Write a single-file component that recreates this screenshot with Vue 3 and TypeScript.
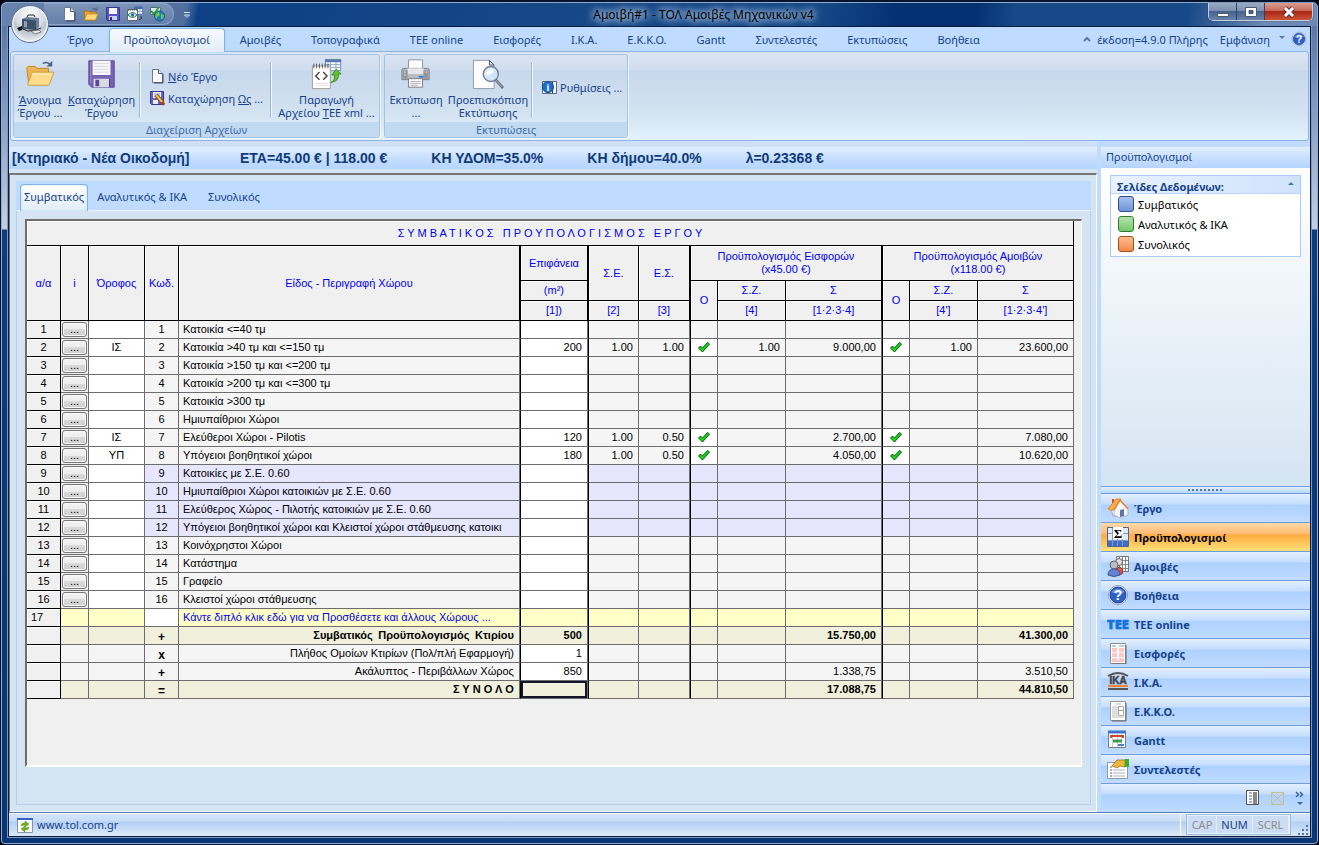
<script setup lang="ts">
import { ref, reactive } from 'vue'

interface Row {
  n: number
  floor: string
  name: string
  area: string
  se: string
  es: string
  sz1: string
  sum1: string
  sz2: string
  sum2: string
  on1: boolean
  on2: boolean
  tint: boolean
}

const icons: Record<string, string> = {
  orb: '<defs><radialGradient id="og" cx=".5" cy=".2" r=".9"><stop offset="0" stop-color="#fff"/><stop offset=".5" stop-color="#d3d8e0"/><stop offset=".6" stop-color="#bcc4cf"/><stop offset="1" stop-color="#fff"/></radialGradient></defs><circle cx="19" cy="19" r="17.5" fill="url(#og)" stroke="#f1f4f9" stroke-width="2"/><circle cx="19" cy="19" r="18.5" fill="none" stroke="#5b6f91"/><path d="M6 23l5-2v4l-3 1z" fill="#111"/><path d="M11 14l5-2 12 1v9l-3 3-14-1z" fill="#6d8099"/><path d="M11 14l14 1.500v9.500l-14-1.500z" fill="#3c5269"/><path d="M13 16l3 .5v6l-3-.5z" fill="#8fa3b8"/><path d="M16 12l1-2 6 0 1 2" fill="none" stroke="#222"/><path d="M9 23l8 3 8-1 5-2" fill="none" stroke="#222"/><path d="M20 26l8-1 2 2-6 2z" fill="#e5e9ee" stroke="#555" stroke-width=".7"/>',
  page: '<path d="M3.5 1.5h6l4 4v9h-10z" fill="#fff" stroke="#6b7a92"/><path d="M9.500 1.500v4h4" fill="#dce4ef" stroke="#47587a"/><path d="M14 6v9H5" fill="none" stroke="#3a4866"/>',
  folder: '<path d="M1 5h5l1 1h6v8H2z" fill="#e8a33a" stroke="#a96c14" stroke-width=".8"/><path d="M4 8h11l-2.500 6H1.500z" fill="#ffd877" stroke="#c48a25" stroke-width=".8"/><path d="M9 3q3-2 5 1m0-3v3h-3" fill="none" stroke="#4c5f86"/>',
  disk: '<path d="M1.500 1.500h13v13h-12l-1-1z" fill="#5553c7" stroke="#39378f"/><path d="M4 2h8v6H4z" fill="#f4f7ff"/><path d="M4 10h8v4H4z" fill="#c9d0ea"/><path d="M5 11h2v3H5z" fill="#30307a"/>',
  diskEdit: '<path d="M1.500 1.500h13v13h-12l-1-1z" fill="#6663c7" stroke="#39378f"/><path d="M4 2h8v6H4z" fill="#f4f7ff"/><path d="M5 4h6M5 6h6" stroke="#8a94b8"/><path d="M4 10h5v4H4z" fill="#e8ecf8"/><path d="M7 5l7 8" stroke="#7a4c10" stroke-width="4"/><path d="M7 5l7 8" stroke="#f4c14c" stroke-width="2"/><path d="M13 12l2 3" stroke="#b0342c" stroke-width="3"/>',
  tableSync: '<path d="M7.500.500h8v8h-8z" fill="#eef4fc" stroke="#557cb5"/><path d="M8 2h7" stroke="#3e6bb0" stroke-width="2"/><path d="M10.500 3v5M13 3v5M8 5.500h7" stroke="#8aa6cd" stroke-width=".8"/><path d="M.500 3.500h10v11H.500z" fill="#fff" stroke="#667"/><path d="M1 4h9" stroke="#333" stroke-dasharray="1 1"/><path d="M1 9q4.500-5 9 0-4.500 5-9 0z" fill="#cfe8f5" stroke="#287c48"/><circle cx="5.500" cy="9" r="1.700" fill="#2b6fb0"/><path d="M12 14q4-1 2-4" fill="none" stroke="#333"/>',
  world: '<path d="M1.500 1.500h10v7h-10z" fill="#ddecf3" stroke="#4a7190"/><path d="M2 5l3 3 5-7" fill="none" stroke="#32a431" stroke-width="2"/><circle cx="10.500" cy="10" r="5" fill="#2779c8" stroke="#17558c"/><path d="M7 7l3-1 1 3-3 2 0 2-2-2zM12 8l3 1-1 4-2 0z" fill="#6bc948"/>',
  openBig: '<path d="M3 11q0-2 2-2h7l2 2h12v17H5z" fill="#edb655" stroke="#c08325"/><path d="M9 15h22q1 0 .5 1L27 28q-.5 1-1.500 1H5q-1.500 0-1-1.500z" fill="#ffdc8b" stroke="#d09a3b"/><path d="M8 17h21" stroke="#fff3c7"/><path d="M20 6q4-3 8 1" fill="none" stroke="#4d6285" stroke-width="1.500"/><path d="M30 3v6h-6z" fill="#4d6285"/>',
  saveBig: '<path d="M3 3h27v28H6l-3-3z" fill="#7661b5" stroke="#5a4795"/><path d="M7 3h19v15H7z" fill="#f8f8fa"/><path d="M9 6h15M9 9h15M9 12h15M9 15h15" stroke="#d3d3db"/><path d="M8 22h17v9H8z" fill="#d9d9e2"/><path d="M10 23h4v7h-4z" fill="#5a4795"/><path d="M25 22v9" stroke="#4a3980"/><path d="M5 4v23" stroke="#a08dd6"/>',
  xmlBig: '<path d="M15.500 1.500h16v12h-16z" fill="#f7fbff" stroke="#6f87ad"/><path d="M15 3h17" stroke="#5778ad" stroke-width="3"/><path d="M20.500 4v10M26.500 4v10M16 7h16M16 10h16" stroke="#8ba2c4"/><path d="M1.500 8.500h19v24h-19z" fill="#fff" stroke="#9a9a9a"/><path d="M3 6v5M6 6v5M9 6v5M12 6v5M15 6v5M18 6v5" stroke="#555"/><path d="M9 15l-4 4 4 4M13 15l4 4-4 4" fill="none" stroke="#444" stroke-width="1.500"/><path d="M5 27h13M5 29h13" stroke="#ddd"/><path d="M21 26q5-2 4-8h-3l5-6 5 5h-3q1 8-8 9z" fill="#62c52f" stroke="#368a15"/>',
  printBig: '<path d="M9 2h15v12H9z" fill="#fff" stroke="#8a929e"/><path d="M2 13q0-2 2-2h25q2 0 2 2v10H2z" fill="#b9bcc1" stroke="#777c85"/><path d="M8 11h17v6H8z" fill="#e5e7ea"/><path d="M3 13h5v9H3zM25 13h5v9h-5z" fill="#92969d"/><path d="M4 15h2M27 15h2M4 18h2" stroke="#e8e8e8"/><path d="M20 20h5" stroke="#2d83d6" stroke-width="2"/><path d="M9 22h15v9H9z" fill="#fff" stroke="#777"/><path d="M11 25h11M11 27h11M11 29h8" stroke="#aab"/>',
  previewBig: '<path d="M1.500 2.500h17l5 5v25h-22z" fill="#fdfdff" stroke="#8d98a8"/><path d="M18.500 2.500v5h5z" fill="#e0e6ee" stroke="#414a5a"/><circle cx="20" cy="17" r="8" fill="#cfe6fa" fill-opacity=".9" stroke="#737f90" stroke-width="1.500"/><path d="M14 18q2-7 10-6-1 6-10 6z" fill="#fff" opacity=".8"/><path d="M25 23l8 9" stroke="#666f7c" stroke-width="3"/><path d="M25 23l7 8" stroke="#aeb6c2"/>',
  info: '<path d="M1.500 2.500h14v12h-14z" fill="#fff" stroke="#5d6b80"/><path d="M11 3h1v11h-1z" fill="#1f3e6d"/><circle cx="7" cy="8" r="5.500" fill="#1f6fd0" stroke="#0f4796"/><text x="7" y="11.500" text-anchor="middle" font-size="10" font-weight="bold" font-family="Liberation Serif" fill="#fff">i</text>',
  help: '<circle cx="11" cy="11" r="9.500" fill="#fff" stroke="#8f9bad"/><circle cx="11" cy="11" r="8" fill="#2c5fc9" stroke="#1d479f"/><path d="M4 8q7-7 14 0-7 3-14 0z" fill="#7ba6ef" opacity=".7"/><text x="11" y="16" text-anchor="middle" font-size="14" font-weight="bold" font-family="Liberation Sans" fill="#fff">?</text>',
  home: '<path d="M4 12h14l-1 7H6z" fill="#fbfbfd" stroke="#a4a9b3"/><path d="M5 2h2v4H5z" fill="#d44d2c"/><path d="M1 12L9 2l5 0-7 11q-3 1-6-1z" fill="#ffad42" stroke="#d67a1e" stroke-width=".8"/><path d="M13 3l8 9v6l-8 3-6-3v-6z" fill="#f3f5f9" stroke="#a4a9b3" stroke-width=".8"/><path d="M7 13l6-10 8 9" fill="none" stroke="#e2852a" stroke-width="1.500"/><path d="M13 13l4-1v7l-4 1z" fill="#5e76a6"/>',
  sigma: '<path d="M.500 1.500h21v19h-21z" fill="#dfe9fa" stroke="#48659a"/><path d="M1 15h20v5H1z" fill="#3d6ec4"/><path d="M1 7.500h20M1 14.500h20M5.500 2v18M10.500 2v18M15.500 2v18" stroke="#7e99c9"/><path d="M6 1h10v12H6z" fill="#fff"/><text x="11" y="12" text-anchor="middle" font-size="13" font-weight="bold" font-family="Liberation Serif" fill="#000">Σ</text>',
  people: '<path d="M9.500 1.500h12v15h-12z" fill="#fff" stroke="#777"/><path d="M12.500 2v14M15.500 2v14M18.500 2v14M10 5.500h11M10 9.500h11M10 13.500h11" stroke="#888"/><path d="M9 20q0-8 4-8 4 2 2 7z" fill="#df5349" stroke="#9a302a"/><circle cx="12" cy="7" r="3.500" fill="#ddd" stroke="#666"/><circle cx="7" cy="10" r="4" fill="#b9bcc2" stroke="#666"/><path d="M1 20q0-6 6-6t6 6q-6 3-12 0z" fill="#6683cf" stroke="#39539b"/>',
  tee: '<text x="11" y="16" text-anchor="middle" font-size="13" font-weight="800" font-family="Open Sans" fill="#1273d8" stroke="#1273d8" stroke-width=".6">ΤΕΕ</text>',
  pink: '<path d="M3.500 1.500h15v20h-15z" fill="#fff" stroke="#909090"/><path d="M5 4h4M12 4h5" stroke="#6aa5ce"/><path d="M5 7h5M12 7h5M5 9h5M12 9h5M5 12h5M12 12h5M5 14h5M12 14h5M5 17h5M12 17h5M5 19h12" stroke="#ff8d8d"/><path d="M19 3v19H5" fill="none" stroke="#666"/>',
  ika: '<path d="M1 5q10-6 20 0" fill="none" stroke="#555" stroke-width="2"/><text x="11" y="13" text-anchor="middle" font-size="10" font-weight="bold" font-family="Liberation Sans" fill="#444" stroke="#444" stroke-width=".5">IKA</text><path d="M1 15h20" stroke="#ff8129" stroke-width="2"/><path d="M1 18h20" stroke="#555" stroke-width="2"/>',
  form: '<path d="M3.500 1.500h15v19h-15z" fill="#fff" stroke="#9a9a9a"/><path d="M8 4h6M5 7h6M5 9h6M5 11h6M5 13h6M5 15h6M5 17h12" stroke="#bbb"/><path d="M11.500 6.500h5v9h-5zM11 10.500h6" fill="none" stroke="#aaa"/><path d="M19 3v18H5" fill="none" stroke="#666"/>',
  gantt: '<path d="M1.500 2.500h17v16h-17z" fill="#fff" stroke="#6d7d99"/><path d="M1 3h18" stroke="#3f72cb" stroke-width="3"/><path d="M5.500 5v13M10.500 5v13M14.500 5v13" stroke="#ccc"/><path d="M4 9V7h12v2" fill="none" stroke="#cf4a2b" stroke-width="2"/><path d="M6 12h9" stroke="#3b9e50" stroke-width="3"/><path d="M11 16h6" stroke="#477fd4" stroke-width="2"/>',
  hand: '<path d="M.500 4.500h20v16h-20z" fill="#fff" stroke="#8d99aa"/><path d="M3 9h2M3 12h2M3 15h2M3 18h2" stroke="#667"/><path d="M6 12h12M6 15h12M6 18h12" stroke="#a9b4c4"/><path d="M5 8l5-6h8v7l-5-1-3 2-2-1z" fill="#f1b73c" stroke="#9d6d17" stroke-width=".8"/><path d="M18 1h4v8h-4z" fill="#33b32f"/>',
  list: '<path d="M1.500.500h12v14h-12z" fill="#fff" stroke="#555"/><path d="M4 3h3M4 6h3M4 9h3M4 12h3" stroke="#4469ad"/><path d="M8 3h4M8 5h4M8 7h4M8 9h4M8 11h4M8 13h4" stroke="#111"/>',
  envelope: '<path d="M1.500 1.500h12v12h-12zM2 2l11 11M13 2L2 13" fill="none" stroke="#c7bf8b"/>',
  refresh: '<path d="M.500 1.500h15v14h-15z" fill="#fff" stroke="#8795ad"/><path d="M0 2h16" stroke="#3263c5" stroke-width="2"/><path d="M4 9q0-3 4-3V4l4 3-4 3V8q-2 0-4 1zM12 10q0 3-4 3v2l-4-3 4-3v2q2 0 4-1z" fill="#6eb31c" stroke="#4d8a12" stroke-width=".5"/>',
}

const quick = [
  { id: 'page', label: 'Νέο' },
  { id: 'folder', label: 'Άνοιγμα' },
  { id: 'disk', label: 'Αποθήκευση' },
  { id: 'tableSync', label: 'Εξαγωγή' },
  { id: 'world', label: 'Έλεγχος' },
]
const menu = ['Έργο', 'Προϋπολογισμοί', 'Αμοιβές', 'Τοπογραφικά', 'TEE online', 'Εισφορές', 'Ι.Κ.Α.', 'Ε.Κ.Κ.Ο.', 'Gantt', 'Συντελεστές', 'Εκτυπώσεις', 'Βοήθεια']
const activeMenu = ref('Προϋπολογισμοί')
const facts = ['[Κτηριακό - Νέα Οικοδομή]', 'ETA=45.00 € | 118.00 €', 'ΚΗ ΥΔΟΜ=35.0%', 'ΚΗ δήμου=40.0%', 'λ=0.23368 €']
const pages = [
  { label: 'Συμβατικός', tone: 'blue' },
  { label: 'Αναλυτικός & ΙΚΑ', tone: 'green' },
  { label: 'Συνολικός', tone: 'orange' },
]
const activePage = ref('Συμβατικός')
const nav = [
  { id: 'home', label: 'Έργο' },
  { id: 'sigma', label: 'Προϋπολογισμοί' },
  { id: 'people', label: 'Αμοιβές' },
  { id: 'help', label: 'Βοήθεια' },
  { id: 'tee', label: 'TEE online' },
  { id: 'pink', label: 'Εισφορές' },
  { id: 'ika', label: 'Ι.Κ.Α.' },
  { id: 'form', label: 'Ε.Κ.Κ.Ο.' },
  { id: 'gantt', label: 'Gantt' },
  { id: 'hand', label: 'Συντελεστές' },
]

const names = [
  'Κατοικία <=40 τμ',
  'Κατοικία >40 τμ και <=150 τμ',
  'Κατοικία >150 τμ και <=200 τμ',
  'Κατοικία >200 τμ και <=300 τμ',
  'Κατοικία >300 τμ',
  'Ημιυπαίθριοι Χώροι',
  'Ελεύθεροι Χώροι - Pilotis',
  'Υπόγειοι βοηθητικοί χώροι',
  'Κατοικίες με Σ.Ε. 0.60',
  'Ημιυπαίθριοι Χώροι κατοικιών με Σ.Ε. 0.60',
  'Ελεύθερος Χώρος - Πιλοτής κατοικιών με Σ.Ε. 0.60',
  'Υπόγειοι βοηθητικοί χώροι και Κλειστοί χώροι στάθμευσης κατοικι',
  'Κοινόχρηστοι Χώροι',
  'Κατάστημα',
  'Γραφείο',
  'Κλειστοί χώροι στάθμευσης',
]
const filled: Record<number, Partial<Row>> = {
  2: { floor: 'ΙΣ', area: '200', se: '1.00', es: '1.00', sz1: '1.00', sum1: '9.000,00', sz2: '1.00', sum2: '23.600,00', on1: true, on2: true },
  7: { floor: 'ΙΣ', area: '120', se: '1.00', es: '0.50', sum1: '2.700,00', sum2: '7.080,00', on1: true, on2: true },
  8: { floor: 'ΥΠ', area: '180', se: '1.00', es: '0.50', sum1: '4.050,00', sum2: '10.620,00', on1: true, on2: true },
}
const rows = reactive<Row[]>(
  names.map((name, i) => ({
    n: i + 1, name, floor: '', area: '', se: '', es: '', sz1: '', sum1: '', sz2: '', sum2: '',
    on1: false, on2: false, tint: i >= 8 && i <= 11, ...filled[i + 1],
  })),
)
const totals = [
  { op: '+', label: 'Συμβατικός\u2002Προϋπολογισμός\u2002Κτιρίου', area: '500', sum1: '15.750,00', sum2: '41.300,00', kind: 'total' },
  { op: 'x', label: 'Πλήθος Ομοίων Κτιρίων (Πολ/πλή Εφαρμογή)', area: '1', sum1: '', sum2: '', kind: 'entry' },
  { op: '+', label: 'Ακάλυπτος - Περιβάλλων Χώρος', area: '850', sum1: '1.338,75', sum2: '3.510,50', kind: 'entry' },
  { op: '=', label: 'Σ Υ Ν Ο Λ Ο', area: '', sum1: '17.088,75', sum2: '44.810,50', kind: 'total grand' },
]
</script>

<template>
  <div class="window">
    <header class="titlebar">
      <button class="orb" aria-label="Μενού εφαρμογής"><svg width="38" height="38" viewBox="0 0 38 38" v-html="icons.orb"></svg></button>
      <div class="quick">
        <button v-for="q in quick" :key="q.id" :aria-label="q.label"><svg width="16" height="16" viewBox="0 0 16 16" v-html="icons[q.id]"></svg></button>
      </div>
      <button class="quick-more" aria-label="Προσαρμογή"><svg width="8" height="8" viewBox="0 0 8 8"><path d="M1 1.500h6M1.500 4h5L4 6.500z" fill="none" stroke="#d6e0f0" /></svg></button>
      <h1>Αμοιβή#1 - ΤΟΛ Αμοιβές Μηχανικών v4</h1>
      <div class="controls">
        <button aria-label="Ελαχιστοποίηση"><svg width="12" height="12" viewBox="0 0 12 12"><path d="M.500 7.500h11v3H.500z" fill="#fff" stroke="#4c5a70" /></svg></button>
        <button aria-label="Μεγιστοποίηση"><svg width="12" height="12" viewBox="0 0 12 12"><path fill-rule="evenodd" d="M.500 1.500h11v9H.500zM4 4.500h4v3H4z" fill="#fff" stroke="#4c5a70" /></svg></button>
        <button class="close" aria-label="Κλείσιμο"><svg width="12" height="12" viewBox="0 0 12 12"><path d="M2 2l8 8M10 2l-8 8" stroke="#5f3038" stroke-width="5" /><path d="M2 2l8 8M10 2l-8 8" stroke="#fff" stroke-width="3" /></svg></button>
      </div>
    </header>

    <div class="client">
      <nav class="menu">
        <button v-for="m in menu" :key="m" :class="{ active: m === activeMenu }" @click="activeMenu = m">{{ m }}</button>
        <div class="menu-right">
          <svg width="8" height="6" viewBox="0 0 8 6"><path d="M1 5l3-3 3 3" fill="none" stroke="#5877a8" stroke-width="2" /></svg>
          <span>έκδοση=4.9.0 Πλήρης</span>
          <button class="view">Εμφάνιση <svg width="6" height="8" viewBox="0 0 6 8"><path d="M0 1h6L3 4z" fill="#5877a8" /></svg></button>
          <button aria-label="Βοήθεια"><svg width="16" height="16" viewBox="0 0 22 22" v-html="icons.help"></svg></button>
        </div>
      </nav>

      <section class="ribbon">
        <div class="group">
          <div class="tools">
            <button class="big open"><svg width="32" height="32" viewBox="0 0 34 34" v-html="icons.openBig"></svg><span><u>Ά</u>νοιγμα<br>Έργου ...</span></button>
            <button class="big save"><svg width="32" height="32" viewBox="0 0 34 34" v-html="icons.saveBig"></svg><span><u>Κ</u>αταχώρηση<br>Έργου</span></button>
            <i class="rule"></i>
            <div class="stack">
              <button><svg width="16" height="16" viewBox="0 0 16 16" v-html="icons.page"></svg><span><u>Ν</u>έο Έργο</span></button>
              <button><svg width="16" height="16" viewBox="0 0 16 16" v-html="icons.diskEdit"></svg><span>Καταχώρηση <u>Ως</u> ...</span></button>
            </div>
            <i class="rule"></i>
            <button class="big xml"><svg width="32" height="32" viewBox="0 0 34 34" v-html="icons.xmlBig"></svg><span>Παραγωγή<br>Αρχείου <u>Τ</u>ΕΕ xml ...</span></button>
          </div>
          <p>Διαχείριση Αρχείων</p>
        </div>
        <div class="group">
          <div class="tools">
            <button class="big print"><svg width="32" height="32" viewBox="0 0 34 34" v-html="icons.printBig"></svg><span>Εκτύπωση<br>...</span></button>
            <button class="big preview"><svg width="32" height="32" viewBox="0 0 34 34" v-html="icons.previewBig"></svg><span>Προεπισκόπιση<br>Εκτύπωσης</span></button>
            <i class="rule"></i>
            <div class="stack settings">
              <button><svg width="16" height="16" viewBox="0 0 16 16" v-html="icons.info"></svg><span>Ρυθμίσεις ...</span></button>
            </div>
          </div>
          <p>Εκτυπώσεις</p>
        </div>
      </section>

      <div class="body">
        <main>
          <div class="facts"><span v-for="f in facts" :key="f">{{ f }}</span></div>
          <div class="document">
            <div class="page-tabs">
              <button v-for="p in pages" :key="p.label" :class="{ active: p.label === activePage }" @click="activePage = p.label">{{ p.label }}</button>
            </div>
            <div class="page">
              <div class="sheet">
                <table>
                  <colgroup>
                    <col class="w34"><col class="w28"><col class="w56"><col class="w34"><col>
                    <col class="w68"><col class="w51"><col class="w51">
                    <col class="w28"><col class="w68"><col class="w96">
                    <col class="w28"><col class="w68"><col class="w96">
                  </colgroup>
                  <thead>
                    <tr class="h25"><th colspan="14">Σ Υ Μ Β Α Τ Ι Κ Ο Σ &nbsp; Π Ρ Ο Υ Π Ο Λ Ο Γ Ι Σ Μ Ο Σ &nbsp; Ε Ρ Γ Ο Υ</th></tr>
                    <tr class="h35">
                      <th rowspan="3">α/α</th><th rowspan="3">i</th><th rowspan="3">Όροφος</th><th rowspan="3">Κωδ.</th>
                      <th rowspan="3">Είδος - Περιγραφή Χώρου</th>
                      <th class="edge">Επιφάνεια</th>
                      <th rowspan="2" class="edge">Σ.Ε.</th><th rowspan="2">Ε.Σ.</th>
                      <th colspan="3" class="edge">Προϋπολογισμός Εισφορών<br>(x45.00 €)</th>
                      <th colspan="3" class="edge">Προϋπολογισμός Αμοιβών<br>(x118.00 €)</th>
                    </tr>
                    <tr class="h20">
                      <th class="edge">(m²)</th><th rowspan="2" class="edge">Ο</th><th>Σ.Ζ.</th><th>Σ</th><th rowspan="2" class="edge">Ο</th><th>Σ.Ζ.</th><th>Σ</th>
                    </tr>
                    <tr class="h20">
                      <th class="edge">[1])</th><th class="edge">[2]</th><th>[3]</th><th>[4]</th><th>[1·2·3·4]</th><th>[4']</th><th>[1·2·3·4']</th>
                    </tr>
                  </thead>
                  <tbody>
                    <tr v-for="r in rows" :key="r.n" :class="{ tint: r.tint }">
                      <th scope="row">{{ r.n }}</th>
                      <td class="pick"><button :aria-label="'Επιλογή ' + r.n">...</button></td>
                      <td class="mid white">{{ r.floor }}</td>
                      <td class="mid">{{ r.n }}</td>
                      <td class="name">{{ r.name }}</td>
                      <td class="edge white">{{ r.area }}</td>
                      <td class="edge">{{ r.se }}</td>
                      <td>{{ r.es }}</td>
                      <td class="edge check" :class="{ white: r.on1 }">
                        <label v-if="r.on1"><input v-model="r.on1" type="checkbox" :aria-label="'Εισφορές ' + r.n"><svg width="12" height="11" viewBox="0 0 12 11"><path d="M.500 6l2-2 2 2 5-5.500 2 1.500-7 8z" fill="#19d619" stroke="#075b07" /></svg></label>
                      </td>
                      <td>{{ r.sz1 }}</td>
                      <td>{{ r.sum1 }}</td>
                      <td class="edge check" :class="{ white: r.on2 }">
                        <label v-if="r.on2"><input v-model="r.on2" type="checkbox" :aria-label="'Αμοιβές ' + r.n"><svg width="12" height="11" viewBox="0 0 12 11"><path d="M.500 6l2-2 2 2 5-5.500 2 1.500-7 8z" fill="#19d619" stroke="#075b07" /></svg></label>
                      </td>
                      <td>{{ r.sz2 }}</td>
                      <td>{{ r.sum2 }}</td>
                    </tr>
                    <tr class="add">
                      <th scope="row" class="left">17</th><td></td><td></td><td class="white"></td>
                      <td class="name">Κάντε διπλό κλικ εδώ για να Προσθέσετε και άλλους Χώρους ...</td>
                      <td class="edge"></td><td class="edge"></td><td></td><td class="edge"></td><td></td><td></td><td class="edge"></td><td></td><td></td>
                    </tr>
                    <tr v-for="t in totals" :key="t.label" :class="t.kind">
                      <th></th><td></td><td></td><td class="mid op">{{ t.op }}</td>
                      <td class="label">{{ t.label }}</td>
                      <td class="edge area">{{ t.area }}</td>
                      <td class="edge"></td><td></td><td class="edge"></td><td></td><td>{{ t.sum1 }}</td>
                      <td class="edge"></td><td></td><td>{{ t.sum2 }}</td>
                    </tr>
                  </tbody>
                </table>
              </div>
            </div>
          </div>
        </main>

        <aside>
          <h2>Προϋπολογισμοί</h2>
          <div class="panel">
            <div class="box">
              <h3>Σελίδες Δεδομένων:<svg width="6" height="4" viewBox="0 0 6 4"><path d="M0 4l3-3 3 3z" fill="#4a71ae" /></svg></h3>
              <button v-for="p in pages" :key="p.label" @click="activePage = p.label"><i :class="p.tone"></i>{{ p.label }}</button>
            </div>
          </div>
          <div class="grip"><i></i></div>
          <nav class="side">
            <button v-for="n in nav" :key="n.label" :class="{ active: n.label === activeMenu }" @click="activeMenu = n.label">
              <svg width="22" height="22" viewBox="0 0 22 22" v-html="icons[n.id]"></svg>{{ n.label }}
            </button>
          </nav>
          <div class="side-foot">
            <button aria-label="Λίστα"><svg width="15" height="16" viewBox="0 0 15 16" v-html="icons.list"></svg></button>
            <button aria-label="Αλληλογραφία"><svg width="15" height="15" viewBox="0 0 15 15" v-html="icons.envelope"></svg></button>
            <button aria-label="Περισσότερα"><svg width="10" height="15" viewBox="0 0 10 15"><path d="M1 1l2.500 2.500L1 6M5 1l2.500 2.500L5 6" fill="none" stroke="#3f659f" stroke-width="1.500" /><path d="M2 11h6l-3 3z" fill="#3f659f" /></svg></button>
          </div>
        </aside>
      </div>

      <footer>
        <a href="#site"><svg width="16" height="16" viewBox="0 0 16 16" v-html="icons.refresh"></svg>www.tol.com.gr</a>
        <div class="keys"><span>CAP</span><span class="on">NUM</span><span>SCRL</span></div>
        <svg class="resize" width="11" height="11" viewBox="0 0 11 11"><path d="M8 0h2v2H8zM8 4h2v2H8zM8 8h2v2H8zM4 4h2v2H4zM4 8h2v2H4zM0 8h2v2H0z" fill="#4f74ab" /></svg>
      </footer>
    </div>
  </div>
</template>

<style>
body { margin: 0; background: #000; }
</style>

<style scoped>
* { box-sizing: border-box; }
button { margin: 0; padding: 0; border: 0; background: none; font: inherit; color: inherit; cursor: default; }
svg { display: block; flex: none; }
.window {
  --ui: "Noto Sans", "Open Sans", sans-serif;
  position: relative;
  display: flex;
  flex-direction: column;
  height: 100vh;
  min-height: 840px;
  padding: 0 8px 7px;
  font: 11px/13px var(--ui);
  color: #15428b;
  background: linear-gradient(180deg, #4f6d9d 0, #6b87b4 60px, #c3cfe2 227px, #0a3c7f 228px, #083573 100%);
  border: 1px solid #06142b;
  border-top-width: 2px;
  border-radius: 7px 7px 5px 5px;
  box-shadow: inset 0 0 0 1px #8fa9cf;
}
.titlebar {
  position: relative;
  display: flex;
  height: 24px;
  margin: 0 -7px;
  border-radius: 6px 6px 0 0;
  border-top: 1px solid #8fa9cf;
  background: linear-gradient(100deg, #6883ad 0, #506f9f 14%, #0d4085 15%, #174887 45%, #174887 62%, #053173 68%, #053173 74%, #174887 77%, #174887 90%, #6d8ab6 96%);
}
.orb { position: absolute; left: 9px; top: 2px; z-index: 2; }
.quick { display: flex; align-items: center; gap: 6px; height: 22px; margin-left: 42px; padding: 0 8px 0 17px; border: 1px solid #8ba3c7; border-left: 0; border-radius: 0 11px 11px 0; background: linear-gradient(#7d93b7, #637fab); }
.quick-more { align-self: center; margin-left: 9px; }
h1 { flex: 1; margin: 0; padding-left: 8px; text-align: center; font: 12px/24px var(--ui); color: #000; text-shadow: 0 0 6px #b9cdea, 0 0 8px #b9cdea, 0 0 10px #b9cdea; }
.controls { display: flex; height: 18px; margin-right: 4px; border: 1px solid #c3cfdf; border-top: 0; border-radius: 0 0 5px 5px; overflow: hidden; box-shadow: 0 0 1px #000; }
.controls button { display: flex; align-items: center; justify-content: center; width: 28px; border-right: 1px solid #2d4267; background: linear-gradient(#9aabc4, #7c90b0 45%, #47628f 50%, #6782aa); }
.controls .close { width: 47px; border: 0; background: linear-gradient(#dc9c8f, #c96a58 45%, #ac2618 50%, #ca5636); }
.client { display: flex; flex: 1; flex-direction: column; min-height: 0; margin: 0 -1px; border: 1px solid #0b1c3a; box-shadow: 0 0 0 1px #7d97be; background: #bfdbff; }
.menu { display: flex; height: 24px; padding: 1px 3px 0 43px; }
.menu > button { padding: 0 14px 1px; border: 1px solid transparent; border-bottom: 0; border-radius: 4px 4px 0 0; }
.menu > .active { margin-bottom: -1px; padding-bottom: 2px; border-color: #86b0e6; background: linear-gradient(#f5faff, #e3ecf6); box-shadow: 0 0 2px #7fd4f0; z-index: 1; }
.menu-right { display: flex; align-items: center; gap: 6px; margin-left: auto; padding-bottom: 1px; }
.menu-right .view { display: flex; align-items: center; gap: 9px; margin-left: 6px; }
.ribbon { display: flex; gap: 4px; height: 90px; margin: 0 1px; padding: 2px 2px 2px; border: 1px solid #8db2e3; border-radius: 3px; background: linear-gradient(#dbe6f4 0, #cfddee 18px, #c7d8ed 19px, #d3e2f0 60px, #e2f2fd 100%); }
.group { display: flex; flex-direction: column; border: 1px solid #a4c2e2; border-radius: 3px; box-shadow: 1px 1px 0 #eef6ff; overflow: hidden; }
.group p { height: 15px; margin: 0; text-align: center; line-height: 15px; color: #3e6aaa; background: #c1d9f1; }
.tools { display: flex; flex: 1; align-items: stretch; padding-top: 3px; }
.big { display: flex; flex-direction: column; align-items: center; white-space: nowrap; text-align: center; }
.big span { margin-top: 3px; }
.open { width: 52px; }
.save { width: 71px; }
.xml { width: 105px; }
.print { width: 62px; }
.preview { width: 82px; }
.rule { width: 2px; margin: 5px 2px; border-left: 1px solid #9ab6d8; background: #f2f8ff; }
.stack { display: flex; flex-direction: column; gap: 6px; width: 125px; padding: 10px 0 0 6px; white-space: nowrap; }
.stack button { display: flex; align-items: center; gap: 3px; height: 16px; }
.settings { width: 92px; padding-top: 21px; }
.body { display: flex; flex: 1; min-height: 0; background: #bfdbff; }
main { display: flex; flex: 1; flex-direction: column; min-width: 0; padding-top: 6px; background: linear-gradient(#cfe0f5 0 6px, #d5e4f2 6px); }
.facts { display: flex; align-items: center; gap: 44px; height: 22px; padding-left: 3px; font: bold 14px/22px "Liberation Sans", sans-serif; color: #103a78; background: linear-gradient(#e3efff, #c7dfff 50%, #b5d4ff); white-space: nowrap; }
.facts span:first-child { min-width: 184px; }
.document { display: flex; flex: 1; flex-direction: column; min-height: 0; margin-top: 4px; padding: 6px 5px 6px 6px; border: 1px solid #fff; border-top: 2px solid #777; border-left: 1px solid #777; background: #d5e4f2; }
.page-tabs { display: flex; gap: 1px; height: 30px; padding: 3px 0 0 4px; background: #bfdbff; border-bottom: 1px solid #eaf3ff; }
.page-tabs button { padding: 0 11px 2px 7px; border: 1px solid transparent; border-bottom: 0; border-radius: 4px 4px 0 0; }
.page-tabs .active { margin-bottom: -1px; padding: 0 3px 3px; border-color: #86b0e6; background: linear-gradient(#fff, #e0ebf7); box-shadow: inset 0 0 2px #9fe0f5; }
.page { display: flex; flex: 1; padding: 8px 8px 37px; border: 1px solid #b5d0ee; border-top: 0; }
.sheet { flex: 1; min-width: 0; padding-right: 7px; overflow: hidden; border: 2px solid #6d6d6d; border-right: 1px solid #fff; border-bottom: 2px solid #fff; background: #f0f0f0; }
table { width: 100%; table-layout: fixed; border-spacing: 0; font: 11px/13px "Liberation Sans", Arial, sans-serif; color: #000; }
.w28 { width: 28px; }
.w34 { width: 34px; }
.w51 { width: 51px; }
.w56 { width: 56px; }
.w68 { width: 68px; }
.w96 { width: 96px; }
th { padding: 0; border-right: 1px solid #000; border-bottom: 1px solid #000; font-weight: normal; background: #f0f0f0; box-shadow: inset 1px 1px 0 #fff; }
thead th { color: #0000f0; }
.h25 { height: 25px; }
.h35 { height: 35px; }
.h20 { height: 20px; }
tbody tr { height: 18px; }
.left { padding-left: 4px; text-align: left; }
td { height: 18px; padding: 0 5px; overflow: hidden; border-right: 1px solid #6d6d6d; border-bottom: 1px solid #6d6d6d; background: #f5f5f5; text-align: right; white-space: nowrap; }
.edge { border-left: 1px solid #000; }
.mid { text-align: center; }
.name { text-align: left; padding-left: 4px; }
.tint td { background: #e6e6ff; }
td.white, .tint td.white, .add td.white { background: #fff; }
td.pick, .tint td.pick { padding: 1px; background: #f0f0f0; }
.pick button { display: block; width: 100%; height: 15px; border: 1px solid #777; border-radius: 3px; line-height: 9px; background: linear-gradient(#f4f4f4, #ececec 50%, #dadada 50%, #cecece); box-shadow: inset 0 0 0 1px #fafafa; }
.check { padding: 0; }
.check label { display: flex; justify-content: center; }
.check input { appearance: none; width: 0; height: 0; margin: 0; }
.add td { background: #ffffc8; color: #0000f0; }
.total td { background: #f0f0dc; font-weight: bold; }
.entry .area { background: #fff; }
td.op { padding: 2px 0 0; font-weight: bold; font-size: 12px; line-height: 12px; }
.grand .area { box-shadow: inset 0 0 0 2px #14142c; }
aside { display: flex; flex: none; flex-direction: column; width: 213px; padding-top: 6px; padding-left: 4px; background: #bfdbff; }
h2 { height: 21px; margin: 0; padding-left: 5px; font: 11px/20px var(--ui); background: linear-gradient(#e3efff, #c7dfff 50%, #b5d4ff); }
.panel { flex: 1; padding: 7px 9px; background: linear-gradient(#fff, #d5e4f2); }
.box { padding-bottom: 2px; border: 1px solid #a9cdfb; background: #fff; color: #000; }
.box h3 { display: flex; justify-content: space-between; align-items: flex-start; height: 18px; margin: 0; padding: 5px 6px 0; border-bottom: 1px solid #b5d4ff; font: bold 11px/11px var(--ui); color: #15428b; background: linear-gradient(90deg, #e8f2ff, #cfe2fb); }
.box button { display: flex; align-items: center; gap: 4px; height: 20px; padding-left: 7px; }
.box i { width: 16px; height: 16px; border: 1px solid #2c4f91; border-radius: 3px; }
.blue { background: linear-gradient(#a9c0ee, #6e95d8); }
.box .green { border-color: #2e7d2c; background: linear-gradient(#b6e3b0, #76c66d); }
.box .orange { border-color: #ab4d14; background: linear-gradient(#fcbd90, #f28a4a); }
.grip { display: flex; align-items: center; justify-content: center; height: 7px; border-top: 1px solid #6f9dd9; background: linear-gradient(#e3efff, #b8d6ff); }
.grip i { width: 35px; height: 2px; background: repeating-linear-gradient(90deg, #4f78b8 0 2px, transparent 2px 4px); }
.side { display: flex; flex-direction: column; border-top: 1px solid #6f9dd9; }
.side button { display: flex; align-items: center; gap: 5px; height: 29px; padding-left: 6px; border-bottom: 1px solid #6f9dd9; font-weight: bold; background: linear-gradient(#e3efff 0, #c6deff 10px, #add1ff 11px, #c0dbff 100%); }
.side .active { color: #000; background: linear-gradient(#ffd9aa 0, #ffbb6e 11px, #ffab3f 12px, #fee17a 100%); }
.side-foot { display: flex; align-items: center; justify-content: flex-end; gap: 10px; height: 28px; padding-right: 5px; background: linear-gradient(#e3efff 0, #c6deff 10px, #add1ff 11px, #c0dbff 100%); }
footer { display: flex; flex: none; align-items: center; height: 24px; border-top: 1px solid #567db1; background: linear-gradient(#d7e6f9, #c7dcf8 35%, #b3d0f5 40%, #d7e5f7 90%); box-shadow: inset 0 1px 0 #fff; }
footer a { display: flex; flex: 1; align-items: center; gap: 4px; height: 100%; padding-left: 8px; border-right: 1px solid #fff; color: #15428b; text-decoration: none; }
.keys { display: flex; height: 19px; margin-left: 6px; border: 1px solid #e8f2ff; outline: 1px solid #9cb8dc; color: #8d8d8d; line-height: 17px; background: #cbdcf3; }
.keys span { width: 36px; text-align: center; border-right: 1px solid #e0ecfb; }
.keys span:first-child { width: 29px; }
.keys .on { color: #15428b; }
.resize { align-self: flex-end; margin: 0 1px 0 8px; }
</style>
